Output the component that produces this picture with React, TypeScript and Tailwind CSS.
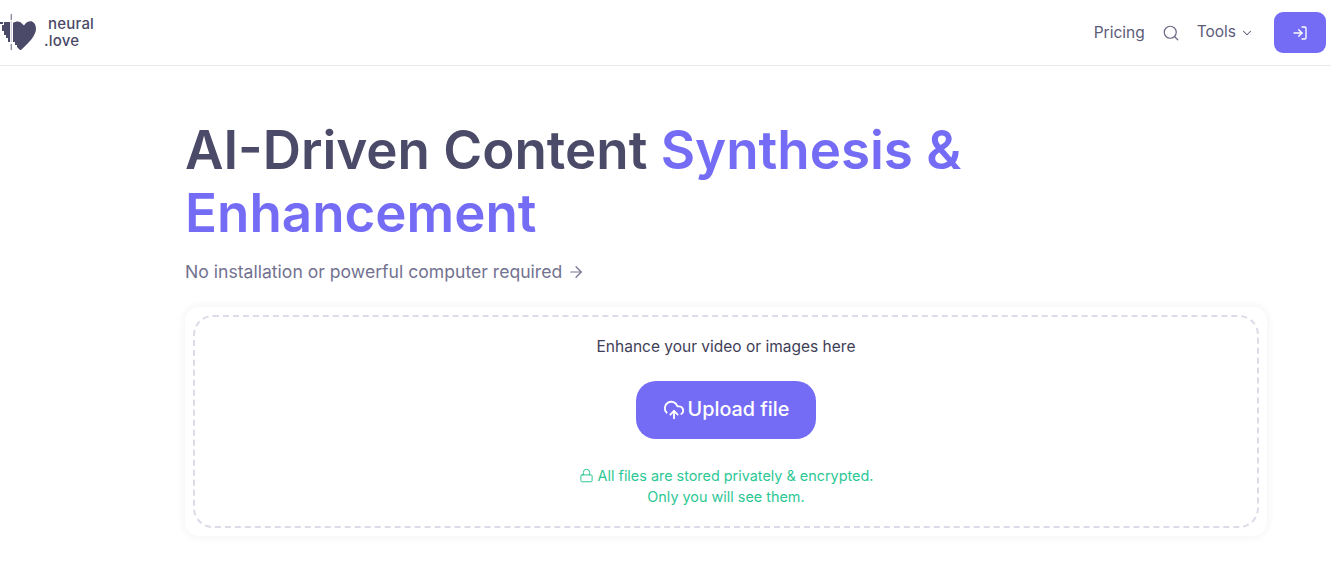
import React from 'react';
import { ArrowRight, ChevronDown, CloudUpload, Lock, LogIn, Search } from 'lucide-react';

// Pixel-stepped heart with the dashed divider, as in the neural.love mark
const Logo: React.FC = () => (
    <svg width="38" height="40" viewBox="0 0 38 40" className="shrink-0">
        <rect x="10.6" y="1" width="1.4" height="6" fill="#8d8ca2" />
        <rect x="10.6" y="8" width="1.4" height="21" fill="#d5d4de" />
        <rect x="10.6" y="31" width="1.4" height="6" fill="#8d8ca2" />
        <path d="M13 10 C15 8.5 18.5 8 20.5 9.2 L24 12.5 C26 9 30 7.5 32.5 8.8 C35 10 36 13 36 16 C36 22 29 30 21 37 L20 37 L17 34 V32 H15 V29 H13 Z" fill="#4b4a68" />
        <path d="M0 9 H3 V11 H0 Z M4 9 H10 V29 H8 V25 H6 V22 H4 V18 H2 V12 H4 Z" fill="#4b4a68" />
    </svg>
);

const Header: React.FC = () => (
    <header className="h-[66px] flex items-center justify-between border-b border-[#e9e9ee] pr-[5px] bg-white">
        <div className="flex items-center gap-[6px]">
            <Logo />
            <div className="text-[15px] leading-[17px] font-medium text-[#4b4a68] tracking-[0.2px] pb-[1px]">
                <div className="pl-[4px]">neural</div>
                <div>.love</div>
            </div>
        </div>
        <nav className="flex items-center text-[#5c5b78] text-[15.5px]">
            <span className="mr-[17px]">Pricing</span>
            <Search size={18} strokeWidth={1.6} className="mr-[17px] text-[#6a6985]" />
            <span className="flex items-center mr-[20px] -mt-[2px]">
                Tools
                <ChevronDown size={14} strokeWidth={1.8} className="ml-[4px] mt-[2px]" />
            </span>
            <button className="w-[52px] h-[41px] rounded-[9px] bg-[#756cf5] text-white flex items-center justify-center">
                <LogIn size={16} strokeWidth={2} />
            </button>
        </nav>
    </header>
);

const UploadBox: React.FC = () => (
    <div className="mt-[22px] rounded-[14px] bg-white shadow-[0_0_10px_rgba(40,40,80,0.07)] p-[8px] h-[229px]">
        <div className="h-full rounded-[20px] border-2 border-dashed border-[#dcdbe8] flex flex-col items-center">
            <p className="mt-[20px] text-[15.5px] leading-[20px] font-normal text-[#3f3e58]">Enhance your video or images here</p>
            <button className="mt-[24px] w-[180px] h-[58px] rounded-[20px] bg-[#756cf5] text-white flex items-center justify-center gap-[3px] text-[19.8px] font-medium">
                <CloudUpload size={22} strokeWidth={2} />
                Upload file
            </button>
            <div className="mt-[26px] text-[14.4px] leading-[21px] font-normal text-[#2cc795] text-center">
                <p className="flex items-center justify-center gap-[4px]">
                    <Lock size={15} strokeWidth={1.6} />
                    All files are stored privately &amp; encrypted.
                </p>
                <p>Only you will see them.</p>
            </div>
        </div>
    </div>
);

export default function App() {
    return (
        <div className="min-h-[562px] bg-white font-['Inter',sans-serif] overflow-hidden">
            <Header />
            <main className="w-[1082px] ml-[185px] pt-[53px]">
                <h1 className="text-[52.9px] leading-[63px] font-semibold text-[#4b4a68]">
                    AI-Driven Content <span className="text-[#756cf5]">Synthesis &amp;<br />Enhancement</span>
                </h1>
                <p className="mt-[14px] flex items-center gap-[5px] text-[17.6px] leading-[26px] text-[#737290]">
                    No installation or powerful computer required
                    <ArrowRight size={18} strokeWidth={1.6} />
                </p>
                <UploadBox />
            </main>
        </div>
    );
}
